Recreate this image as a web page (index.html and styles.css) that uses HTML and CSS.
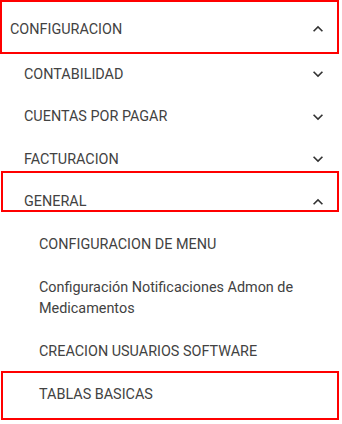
FILE: index.html
```html
<!DOCTYPE html>
<html lang="es">
<head>
<meta charset="utf-8">
<title>Menu</title>
<link rel="stylesheet" href="styles.css">
</head>
<body>
<nav class="menu">
  <div class="row level1 first mark mark-a">
    <span class="label">CONFIGURACION</span>
    <svg class="chev" viewBox="0 0 24 24"><path d="M7.41 15.41L12 10.83l4.59 4.58L18 14l-6-6-6 6z"/></svg>
  </div>
  <div class="row level2">
    <span class="label">CONTABILIDAD</span>
    <svg class="chev" viewBox="0 0 24 24"><path d="M16.59 8.59L12 13.17 7.41 8.59 6 10l6 6 6-6z"/></svg>
  </div>
  <div class="row level2">
    <span class="label">CUENTAS POR PAGAR</span>
    <svg class="chev" viewBox="0 0 24 24"><path d="M16.59 8.59L12 13.17 7.41 8.59 6 10l6 6 6-6z"/></svg>
  </div>
  <div class="row level2">
    <span class="label">FACTURACION</span>
    <svg class="chev" viewBox="0 0 24 24"><path d="M16.59 8.59L12 13.17 7.41 8.59 6 10l6 6 6-6z"/></svg>
  </div>
  <div class="row level2 mark mark-b">
    <span class="label">GENERAL</span>
    <svg class="chev" viewBox="0 0 24 24"><path d="M7.41 15.41L12 10.83l4.59 4.58L18 14l-6-6-6 6z"/></svg>
  </div>
  <div class="row level3">
    <span class="label">CONFIGURACION DE MENU</span>
  </div>
  <div class="row level3 multi">
    <span class="label">Configuración Notificaciones Admon de Medicamentos</span>
  </div>
  <div class="row level3">
    <span class="label">CREACION USUARIOS SOFTWARE</span>
  </div>
  <div class="row level3 mark mark-c">
    <span class="label">TABLAS BASICAS</span>
  </div>
</nav>
</body>
</html>
```
FILE: styles.css
```css
html, body {
  margin: 0;
  padding: 0;
  background: #ffffff;
}
body {
  font-family: Roboto, "Liberation Sans", Arial, sans-serif;
  font-size: 14.4px;
  color: #424242;
  width: 342px;
  height: 424px;
  overflow: hidden;
}
.menu {
  display: flex;
  flex-direction: column;
  padding-top: 5.5px;
}
.row {
  position: relative;
  display: flex;
  align-items: center;
  justify-content: space-between;
  padding: 10.5px 14px 10.5px 10px;
  line-height: 21.5px;
}
.row.first {
  padding-top: 13px;
  padding-bottom: 13px;
}
.row.multi {
  padding-top: 11px;
  padding-bottom: 11px;
}
.level2 { padding-left: 24px; }
.level3 { padding-left: 39px; padding-right: 30px; }
.label {
  flex: 1;
}
.chev {
  width: 20px;
  height: 20px;
  flex: none;
  fill: #333333;
}
.mark::after {
  content: "";
  position: absolute;
  left: 1px;
  right: 3px;
  border: 2px solid #ff0000;
  pointer-events: none;
}
.mark-a::after { left: 0; top: -5.5px; bottom: -0.75px; }
.mark-b::after { top: -9.5px; bottom: 11.5px; }
.mark-c::after { top: -2.5px; bottom: -4px; }
```
